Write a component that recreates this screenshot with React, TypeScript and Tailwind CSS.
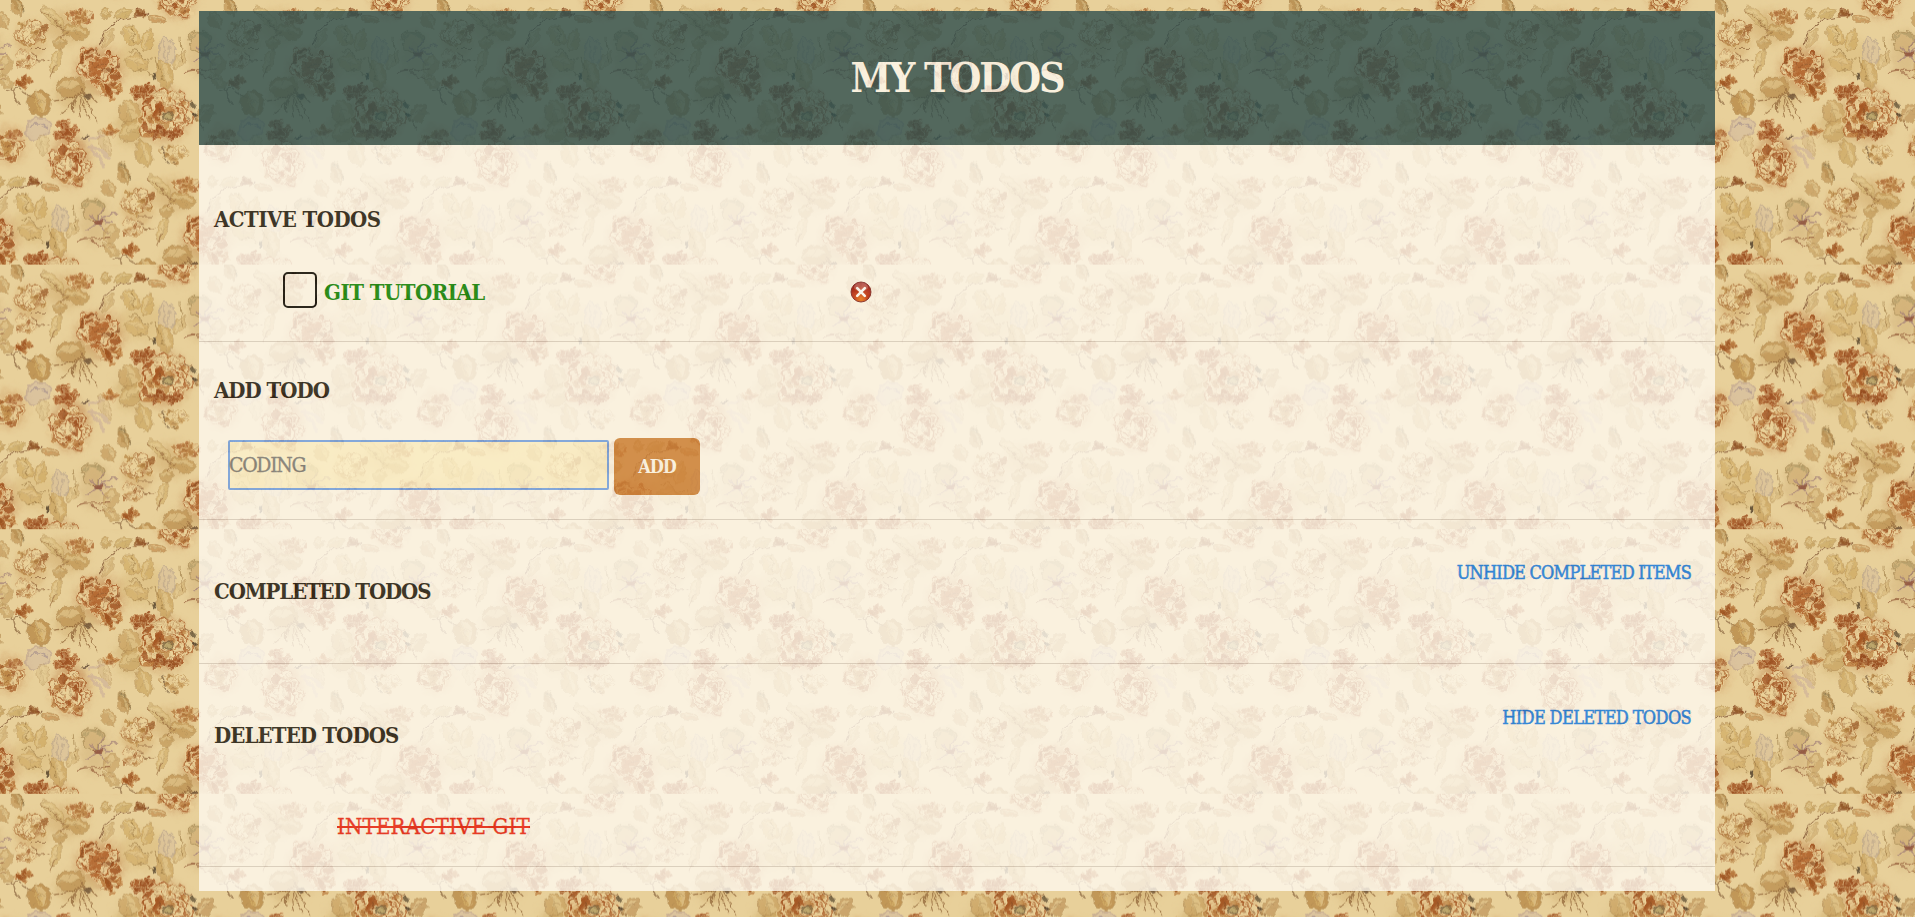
import React from "react";

const SERIF = "font-['DejaVu_Serif_Condensed','DejaVu_Serif',serif] [font-stretch:condensed]";

function rng(seed: number) {
  let s = seed;
  return () => {
    s = (s * 16807) % 2147483647;
    return s / 2147483647;
  };
}

type P = { x: number; y: number; w: number; h: number; r?: number };

/** Pale, veined leaf. */
function Leaf({ x, y, w, h, r = 0, fill = "#c49a55", o = 0.7 }: P & { fill?: string; o?: number }) {
  const a = w / 2;
  const b = h / 2;
  return (
    <g transform={`translate(${x} ${y}) rotate(${r})`} opacity={o * 0.82}>
      <path
        d={`M${-a} 0 C${-a * 0.6} ${-b * 1.3} ${a * 0.5} ${-b * 1.2} ${a} 0 C${a * 0.5} ${b * 1.2} ${-a * 0.5} ${b * 1.3} ${-a} 0Z`}
        fill={fill}
        stroke="#a9824a"
        strokeWidth="2"
      />
      <path
        d={`M${-a} 0 C${-a * 0.3} ${-b * 0.8} ${a * 0.3} ${-b * 0.8} ${a * 0.7} ${-b * 0.1} C${a * 0.2} ${b * 0.1} ${-a * 0.4} ${b * 0.2} ${-a} 0Z`}
        fill="#e6cc92"
        opacity="0.65"
      />
      <path
        d={`M${-a} 0 L${a * 0.9} 0 M${-a * 0.3} 0 L${a * 0.1} ${-b * 0.6} M${-a * 0.1} 0 L${a * 0.35} ${b * 0.6}`}
        stroke="#94713c"
        strokeWidth="2"
        fill="none"
        opacity="0.5"
      />
    </g>
  );
}

/** Loose bloom: rings of curved petals with dark creases and pale rims. */
function Bloom({ x, y, w, h, r = 0, seed, n = 16, dark = "#a0541f", mid = "#b97638", pale = "#ebd19a", mix = 0.5, o = 1 }: P & {
  seed: number; n?: number; dark?: string; mid?: string; pale?: string; mix?: number; o?: number;
}) {
  const rand = rng(seed);
  const petals: React.ReactNode[] = [];
  for (let i = 0; i < n; i++) {
    const ang = (i * 137.5 + rand() * 60) % 360;
    const d = Math.sqrt((n - i) / n) * (0.32 + rand() * 0.12);
    const px = Math.cos((ang * Math.PI) / 180) * d * w;
    const py = Math.sin((ang * Math.PI) / 180) * d * h;
    const size = (0.1 + rand() * 0.1) * Math.min(w, h) + 3;
    const light = rand() > mix;
    petals.push(
      <g key={i} transform={`translate(${px} ${py}) rotate(${ang + rand() * 90 - 45}) scale(${size / 10} ${size / 13})`}>
        <path d="M-10 -4 C-6 -13 8 -12 11 0 C9 11 -5 13 -10 5 C-5 3 -5 -1 -10 -4Z" fill={light ? pale : rand() > 0.5 ? dark : mid} opacity={light ? 0.88 : 0.76} />
        <path d="M-8 5 C-2 11 8 9 11 0 C12 -6 7 -10 2 -10" fill="none" stroke={light ? dark : pale} strokeWidth={light ? 1.7 : 1.9} opacity="0.7" />
        <path d="M-7 0 C-2 -3 3 -2 7 2" fill="none" stroke="#7d4a24" strokeWidth="1.3" opacity="0.5" />
      </g>
    );
  }
  return <g transform={`translate(${x} ${y}) rotate(${r})`} opacity={o}>{petals}</g>;
}

function Motif() {
  return (
    <g id="motif" filter="url(#ragged)">
      {/* shadows of washed-out colour */}
      <g filter="url(#wash)" opacity="0.5">
        <ellipse cx="300" cy="210" rx="72" ry="68" fill="#b87840" />
        <ellipse cx="490" cy="345" rx="80" ry="80" fill="#ba7e45" />
        <ellipse cx="212" cy="480" rx="56" ry="78" fill="#b87842" />
        <ellipse cx="92" cy="120" rx="45" ry="58" fill="#cda263" />
        <ellipse cx="428" cy="170" rx="70" ry="60" fill="#d8b878" />
        <ellipse cx="30" cy="435" rx="45" ry="55" fill="#c58a50" />
        <ellipse cx="605" cy="160" rx="45" ry="70" fill="#cfae76" />
        <ellipse cx="225" cy="280" rx="60" ry="45" fill="#caa566" />
        <ellipse cx="400" cy="380" rx="55" ry="60" fill="#ccaa6a" />
        <ellipse cx="200" cy="80" rx="60" ry="50" fill="#cca466" />
      </g>

      {/* upper left spray */}
      <Leaf x={158} y={52} w={90} h={34} r={42} fill="#d0b06c" o={0.65} />
      <Leaf x={228} y={95} w={84} h={50} r={8} fill="#c09552" o={0.85} />
      <Leaf x={181} y={128} w={42} h={40} fill="#bd9351" o={0.8} />
      <Leaf x={168} y={182} w={78} h={34} r={-68} fill="#ceaa64" o={0.75} />
      <Bloom x={242} y={52} w={88} h={52} seed={41} n={18} mix={0.9} dark="#ad6630" mid="#bd8648" />
      <path d="M200 95 L180 120 M150 235 L165 190 M196 92 C170 70 150 45 118 28" stroke="#96683a" strokeWidth="3" fill="none" opacity="0.7" />

      <Bloom x={92} y={100} w={108} h={84} seed={77} n={22} mix={0.4} dark="#a36531" mid="#bb8b4a" />
      <Bloom x={76} y={182} w={56} h={64} seed={15} n={12} mix={0.55} dark="#a46432" mid="#bf8d50" />
      <path d="M92 145 L140 145 M95 160 C110 190 130 185 145 178" stroke="#8a5c34" strokeWidth="3" fill="none" opacity="0.7" />
      <Bloom x={70} y={245} w={58} h={44} seed={12} n={12} mix={0.9} />
      <path d="M35 260 L55 318 L40 285Z M15 275 L60 262 M50 262 L95 290" fill="#6b4a2c" stroke="#7b5430" strokeWidth="4" opacity="0.6" />

      <Leaf x={52} y={22} w={56} h={38} r={70} fill="#bd9050" o={0.8} />
      <Leaf x={8} y={62} w={60} h={40} r={60} fill="#bb8d4c" o={0.7} />

      {/* large russet rose */}
      <Bloom x={298} y={200} w={140} h={112} r={28} seed={301} n={50} mix={0.64} dark="#9f501e" mid="#b66c34" />
      <Bloom x={335} y={270} w={66} h={66} seed={92} n={14} mix={0.65} />
      <path d="M240 190 C255 150 280 140 300 165 M300 215 C325 205 345 215 365 190" stroke="#80421b" strokeWidth="5" fill="none" opacity="0.6" />

      {/* bulb with trailing roots */}
      <Leaf x={212} y={262} w={92} h={72} r={-5} fill="#c09657" o={1} />
      <path
        d="M240 275 C262 300 275 330 295 372 M240 285 C250 315 260 340 272 362 M235 285 C245 310 235 330 245 352 M232 285 C225 315 200 325 185 338 M232 290 C215 305 220 330 222 342 M245 275 C262 280 265 290 270 302 M228 290 C200 300 180 296 160 300 M242 265 C260 282 275 290 292 308"
        stroke="#8c6034" strokeWidth="3.2" fill="none" opacity="0.75"
      />
      <ellipse cx="264" cy="290" rx="7" ry="11" fill="#6c5238" opacity="0.7" transform="rotate(-30 264 290)" />

      <Leaf x={118} y={310} w={84} h={78} r={70} fill="#b98a49" o={1} />
      <path d="M100 290 L118 335 M115 285 L128 335 M135 290 L120 340" stroke="#d9b66c" strokeWidth="3" opacity="0.7" />

      {/* lilac curl */}
      <path d="M82 408 C70 365 110 340 140 358 C165 375 150 405 125 410 C110 415 100 425 88 418 Z" fill="#cdb5a0" opacity="0.5" stroke="#ad928c" strokeWidth="5" />
      <path d="M90 385 C105 365 130 368 140 385" stroke="#a08a8a" strokeWidth="5" fill="none" opacity="0.6" />
      <Leaf x={128} y={435} w={64} h={36} r={80} fill="#d8bc84" o={0.6} />

      {/* lower rose */}
      <Bloom x={197} y={396} w={74} h={62} seed={53} n={22} mix={0.97} dark="#a05324" mid="#ad632f" />
      <Bloom x={210} y={495} w={112} h={126} seed={1009} n={42} mix={0.48} dark="#a05221" mid="#bb7e42" />
      <path d="M244 412 L268 408" stroke="#594030" strokeWidth="5" opacity="0.75" />

      <path d="M265 420 C300 400 320 408 332 395 M262 440 C290 435 320 470 330 478 M270 450 C295 465 305 480 310 505" stroke="#bb9c98" strokeWidth="10" fill="none" opacity="0.4" />
      <Bloom x={330} y={392} w={36} h={46} seed={29} n={9} mix={0.9} dark="#ac6c3a" />
      <Leaf x={315} y={430} w={84} h={34} r={66} fill="#d5b381" o={0.6} />
      <Leaf x={372} y={512} w={62} h={34} r={65} fill="#a08048" o={0.8} />
      <path d="M358 490 C375 490 385 515 388 545" stroke="#5d4c2c" strokeWidth="5" fill="none" opacity="0.45" />

      {/* pale sprig on the right */}
      <Leaf x={394} y={108} w={72} h={50} r={55} fill="#cfa95f" o={0.8} />
      <Leaf x={442} y={120} w={66} h={38} r={-75} fill="#cda75e" o={0.8} />
      <Leaf x={410} y={188} w={72} h={52} r={15} fill="#d0aa64" o={0.75} />
      <Leaf x={494} y={225} w={88} h={54} r={76} fill="#c59c55" o={0.8} />
      <Leaf x={540} y={180} w={60} h={32} r={-60} fill="#d4b272" o={0.7} />
      <path d="M480 180 C468 130 490 100 500 112 C530 135 535 170 512 195 M492 125 L495 185 M510 140 L500 195" stroke="#b8a28c" strokeWidth="5" fill="#d9c09a" opacity="0.65" />
      <path d="M385 155 C410 140 430 180 455 180 M400 215 C430 200 445 215 460 230 M465 170 L490 240 M395 75 L405 130 M540 110 L545 190" stroke="#95713c" strokeWidth="3" fill="none" opacity="0.6" />
      <ellipse cx="463" cy="228" rx="5" ry="10" fill="#4c3b25" opacity="0.8" />

      {/* dark bud and its stem */}
      <Bloom x={422} y={41} w={36} h={28} seed={8} n={10} mix={1} dark="#854520" mid="#955828" />
      <path d="M405 48 C360 55 335 65 318 92 C310 110 300 122 298 135 M435 50 L450 40" stroke="#7b4e2e" strokeWidth="3.5" fill="none" opacity="0.75" />
      <Leaf x={315} y={40} w={38} h={34} fill="#bf9650" o={0.8} />
      <Leaf x={368} y={40} w={60} h={28} r={-15} fill="#c5a055" o={0.75} />
      <Leaf x={325} y={112} w={66} h={26} r={-60} fill="#c7a160" o={0.6} />
      <Leaf x={472} y={58} w={56} h={24} r={10} fill="#c58e50" o={0.9} />

      {/* cabbage rose */}
      <Leaf x={388} y={338} w={78} h={70} r={70} fill="#c9a160" o={0.85} />
      <Leaf x={395} y={392} w={82} h={66} r={-35} fill="#caa563" o={0.85} />
      <Bloom x={431} y={275} w={78} h={58} seed={63} n={22} mix={0.97} dark="#9e5222" mid="#ac612e" />
      <Bloom x={490} y={345} w={146} h={150} seed={501} n={56} mix={0.38} dark="#a45522" mid="#bf8848" />
      <Bloom x={470} y={395} w={66} h={46} seed={91} n={14} mix={0.9} dark="#994c1e" />
      <Bloom x={524} y={398} w={48} h={48} seed={133} n={12} mix={0.95} dark="#994c1e" mid="#aa5c2a" />
      <Bloom x={500} y={292} w={90} h={48} seed={44} n={15} mix={0.15} dark="#ab7a46" />
      <ellipse cx="505" cy="350" rx="17" ry="13" fill="#b6a167" stroke="#7c6640" strokeWidth="4" opacity="0.85" />

      <Leaf x={432} y={462} w={90} h={50} r={75} fill="#c9a25a" o={0.8} />
      <Bloom x={520} y={462} w={76} h={66} seed={333} n={14} mix={0.3} dark="#b08040" mid="#c69a58" />
      <path d="M484 435 L505 495 M520 488 L526 494" stroke="#5c432a" strokeWidth="4" opacity="0.5" />

      {/* berries and twig */}
      <path d="M548 300 C560 298 570 305 582 316 M585 342 C600 350 610 335 625 330 M580 345 C600 360 598 375 615 384" stroke="#8b5f38" strokeWidth="4" fill="none" opacity="0.7" />
      <ellipse cx="582" cy="315" rx="9" ry="9" fill="#66563a" opacity="0.8" />
      <ellipse cx="582" cy="342" rx="9" ry="5" fill="#4d3d29" opacity="0.8" />
      <Leaf x={616} y={340} w={70} h={46} r={-50} fill="#b98b50" o={0.75} />

      {/* edge rose */}
      <Bloom x={22} y={442} w={98} h={88} seed={811} n={26} mix={0.42} dark="#a8622e" mid="#c08c4a" />
      <Bloom x={42} y={402} w={46} h={34} seed={812} n={9} mix={1} dark="#ad6a3a" mid="#b87a42" />

      {/* lily */}
      <path d="M568 130 C560 90 610 82 630 112 C640 130 610 150 600 160 C590 155 572 150 568 130Z" fill="#d2b076" opacity="0.75" stroke="#a88b55" strokeWidth="4" />
      <path d="M572 118 C590 88 620 95 626 120" stroke="#a2925f" strokeWidth="5" fill="none" opacity="0.5" />
      <path d="M612 160 L668 132 M610 160 L645 195 M612 158 L580 185 M612 160 L590 135 M612 162 L630 118 M614 158 L660 160" stroke="#9f7c78" strokeWidth="5" fill="none" opacity="0.7" />
      <ellipse cx="612" cy="160" rx="14" ry="6" fill="#8f5038" opacity="0.8" />
      <Leaf x={655} y={195} w={66} h={44} r={-70} fill="#c19858" o={0.7} />
      <path d="M546 222 C570 205 600 212 655 210 M595 215 C610 235 630 230 660 238" stroke="#935b38" strokeWidth="3.5" fill="none" opacity="0.75" />
      <Leaf x={652} y={245} w={58} h={34} r={40} fill="#bd9250" o={0.65} />
    </g>
  );
}

const REPEATS = [
  [319, -505], [-639, 0], [0, 0], [639, 0], [-320, 505], [320, 505], [959, 505],
];

function Wallpaper() {
  return (
    <svg className="absolute inset-0 h-full w-full" aria-hidden="true">
      <defs>
        <filter id="ragged" filterUnits="userSpaceOnUse" x="-80" y="-80" width="820" height="720" colorInterpolationFilters="sRGB">
          <feTurbulence type="fractalNoise" baseFrequency="0.045" numOctaves="3" seed="4" result="n" />
          <feDisplacementMap in="SourceGraphic" in2="n" scale="22" xChannelSelector="R" yChannelSelector="G" />
          <feGaussianBlur stdDeviation="2.2" />
        </filter>
        <filter id="wash" x="-20%" y="-20%" width="140%" height="140%" colorInterpolationFilters="sRGB">
          <feGaussianBlur stdDeviation="14" />
        </filter>
        <pattern id="tile" width="213" height="264.6" patternUnits="userSpaceOnUse">
          <rect width="213" height="265" fill="#e8d09a" />
          <g transform="scale(0.33333)">
            <g transform="translate(-320 -505)"><Motif /></g>
            {REPEATS.map(([x, y]) => (
              <use key={`${x},${y}`} href="#motif" x={x} y={y} />
            ))}
          </g>
        </pattern>
      </defs>
      <rect width="100%" height="100%" fill="url(#tile)" />
    </svg>
  );
}

function DeleteIcon() {
  return (
    <svg width="22" height="22" viewBox="0 0 22 22">
      <defs>
        <radialGradient id="ball" cx="0.5" cy="0.85" r="0.8">
          <stop offset="0" stopColor="#e8700c" />
          <stop offset="0.45" stopColor="#bf2808" />
          <stop offset="1" stopColor="#8e0008" />
        </radialGradient>
      </defs>
      <circle cx="11" cy="11" r="10" fill="url(#ball)" stroke="#6c0a0e" strokeWidth="0.9" />
      <ellipse cx="11" cy="6" rx="7" ry="4.4" fill="#fff" opacity="0.25" />
      <path d="M7.2 7.2 L14.8 14.8 M14.8 7.2 L7.2 14.8" stroke="#fff" strokeWidth="2.6" strokeLinecap="round" />
    </svg>
  );
}

function Heading({ children, className }: { children: React.ReactNode; className: string }) {
  return <h2 className={`whitespace-nowrap text-[22px] leading-[28px] font-bold text-[#18150f] ${className}`}>{children}</h2>;
}

export default function App() {
  return (
    <div className={`relative h-[917px] w-full overflow-hidden bg-[#e8d09a] uppercase ${SERIF}`}>
      <Wallpaper />
      <main className="relative ml-[199px] mt-[11px] h-[880px] w-[1516px] bg-[#fffaf0] opacity-80">
        <header className="flex h-[134px] items-center justify-center bg-[#2f4f4f]">
          <h1 className="whitespace-nowrap text-[41px] leading-[50px] font-bold tracking-[-2.15px] text-[#fffaf0]">My Todos</h1>
        </header>

        <section className="h-[197px] border-b border-[#d9d0c6] pl-[15px] pt-[60px]">
          <Heading className="tracking-[-0.55px]">Active Todos</Heading>
          <div className="flex items-start pl-[69px] pt-[39px]">
            <span className="h-[36px] w-[34px] shrink-0 rounded-[5px] border-2 border-black" />
            <span className="ml-[7px] mt-[6px] w-[520px] whitespace-nowrap text-[22px] leading-[28px] font-bold tracking-[-0.5px] text-[#008000]">
              Git Tutorial
            </span>
            <button className="mt-[9px] ml-[6px]" aria-label="Delete"><DeleteIcon /></button>
          </div>
        </section>

        <section className="h-[178px] border-b border-[#d9d0c6] pl-[15px] pt-[34px]">
          <Heading className="tracking-[-1px]">Add Todo</Heading>
          <div className="flex items-start pl-[14px] pt-[34px]">
            <div className="mt-[2px] flex h-[50px] w-[381px] items-center rounded-[2px] border-2 border-[#6c9fea] bg-[#fef3cf]">
              <span className="-ml-px text-[21px] leading-[26px] tracking-[-1.3px] text-[#757575] [-webkit-text-stroke:0.3px_#757575]">Coding</span>
            </div>
            <button className="ml-[5px] flex h-[57px] w-[86px] items-center justify-center rounded-[6px] bg-[#cd8038] pt-px text-[18px] leading-[24px] font-bold tracking-[-1px] uppercase text-[#fffaf0]">
              Add
            </button>
          </div>
        </section>

        <section className="flex h-[144px] items-start justify-between border-b border-[#d9d0c6] pl-[15px] pr-[24px]">
          <Heading className="mt-[57px] tracking-[-1.13px]">Completed Todos</Heading>
          <a className="mt-[41px] whitespace-nowrap text-[18px] leading-[24px] tracking-[-0.78px] text-[#0b78e6] [-webkit-text-stroke:0.5px_#0b78e6]">Unhide Completed Items</a>
        </section>

        <section className="h-[203px] border-b border-[#d9d0c6] pl-[15px] pr-[24px]">
          <div className="flex items-start justify-between">
            <Heading className="mt-[57px] tracking-[-0.87px]">Deleted Todos</Heading>
            <a className="mt-[42px] whitespace-nowrap text-[18px] leading-[24px] tracking-[-0.63px] text-[#0b78e6] [-webkit-text-stroke:0.5px_#0b78e6]">Hide Deleted Todos</a>
          </div>
          <p className="ml-[123px] mt-[64px] whitespace-nowrap text-[22px] leading-[28px] tracking-[0.2px] text-[#e81a0c] line-through decoration-2 [-webkit-text-stroke:0.3px_#e81a0c]">
            Interactive Git
          </p>
        </section>
      </main>
    </div>
  );
}
